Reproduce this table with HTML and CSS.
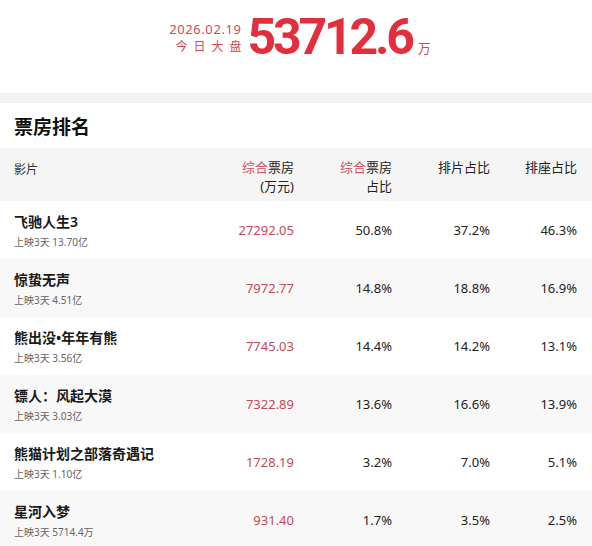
FILE: index.html
```html
<!DOCTYPE html>
<html>
<head>
<meta charset="utf-8">
<link rel="stylesheet" href="styles.css">
</head>
<body>
<div class="page">
  <header class="top">
    <div class="top-left">
      <div class="date">2026.02.19</div>
      <div class="today">今日大盘</div>
    </div>
    <div class="big">53712.6</div>
    <div class="unit">万</div>
  </header>
  <div class="band"></div>
  <h2 class="title">票房排名</h2>
  <div class="table">
    <div class="row head">
      <div class="c film">影片</div>
      <div class="c num"><span class="hl">综合</span>票房<br>(万元)</div>
      <div class="c num"><span class="hl">综合</span>票房<br>占比</div>
      <div class="c num">排片占比</div>
      <div class="c num">排座占比</div>
    </div>
    <div class="row">
      <div class="c film"><div class="name">飞驰人生3</div><div class="sub">上映3天 13.70亿</div></div>
      <div class="c num red">27292.05</div>
      <div class="c num">50.8%</div>
      <div class="c num">37.2%</div>
      <div class="c num">46.3%</div>
    </div>
    <div class="row alt">
      <div class="c film"><div class="name">惊蛰无声</div><div class="sub">上映3天 4.51亿</div></div>
      <div class="c num red">7972.77</div>
      <div class="c num">14.8%</div>
      <div class="c num">18.8%</div>
      <div class="c num">16.9%</div>
    </div>
    <div class="row">
      <div class="c film"><div class="name">熊出没•年年有熊</div><div class="sub">上映3天 3.56亿</div></div>
      <div class="c num red">7745.03</div>
      <div class="c num">14.4%</div>
      <div class="c num">14.2%</div>
      <div class="c num">13.1%</div>
    </div>
    <div class="row alt">
      <div class="c film"><div class="name">镖人：风起大漠</div><div class="sub">上映3天 3.03亿</div></div>
      <div class="c num red">7322.89</div>
      <div class="c num">13.6%</div>
      <div class="c num">16.6%</div>
      <div class="c num">13.9%</div>
    </div>
    <div class="row">
      <div class="c film"><div class="name">熊猫计划之部落奇遇记</div><div class="sub">上映3天 1.10亿</div></div>
      <div class="c num red">1728.19</div>
      <div class="c num">3.2%</div>
      <div class="c num">7.0%</div>
      <div class="c num">5.1%</div>
    </div>
    <div class="row alt">
      <div class="c film"><div class="name">星河入梦</div><div class="sub">上映3天 5714.4万</div></div>
      <div class="c num red">931.40</div>
      <div class="c num">1.7%</div>
      <div class="c num">3.5%</div>
      <div class="c num">2.5%</div>
    </div>
  </div>
</div>
</body>
</html>
```

FILE: styles.css
```css
* { box-sizing: border-box; margin: 0; padding: 0; }
html, body { background: #fff; }
body {
  margin: 0;
  font-family: "Noto Sans", "Noto Sans CJK SC", sans-serif;
  color: #222;
  width: 592px;
  overflow: hidden;
}
.page { width: 592px; }
.top {
  display: flex;
  justify-content: center;
  align-items: flex-end;
  height: 93px;
  padding-bottom: 31px;
  padding-left: 8px;
}
.top-left {
  display: flex;
  flex-direction: column;
  align-items: flex-end;
  padding-bottom: 6px;
  margin-right: 6px;
}
.date {
  font-size: 13px;
  line-height: 18px;
  color: #cf4a55;
  letter-spacing: 0.6px;
}
.today {
  font-size: 12px;
  line-height: 18px;
  color: #cf4a55;
  letter-spacing: 6px;
  margin-right: -6px;
}
.big {
  font-family: "Roboto", "Noto Sans", sans-serif;
  font-weight: 700;
  font-size: 50px;
  line-height: 50px;
  letter-spacing: -3.2px;
  color: #e12f3d;
}
.unit {
  font-size: 13px;
  line-height: 18px;
  color: #cf4a55;
  margin-left: 6px;
  padding-bottom: 5px;
}
.band { height: 10px; background: #f2f2f2; }
.title {
  font-size: 19px;
  font-weight: 700;
  line-height: 24px;
  color: #111;
  padding: 12px 14px 9px;
}
.row {
  display: grid;
  grid-template-columns: 182px 98px 98px 98px 87px;
  padding: 0 15px 0 14px;
  height: 58px;
  align-items: center;
}
.row.alt { background: #f8f8f8; }
.row.head {
  background: #f5f5f5;
  height: 53px;
  align-items: start;
  padding-top: 10px;
}
.head .c { font-size: 12px; line-height: 19px; color: #333; }
.hl { color: #d0505c; }
.c.num { text-align: right; font-size: 13px; color: #222; }
.c.num.red { color: #c54a57; }
.film { padding-top: 2px; }
.name {
  font-size: 14px;
  font-weight: 600;
  line-height: 20px;
  color: #1a1a1a;
}
.sub {
  font-size: 10px;
  line-height: 16px;
  color: #666;
  margin-top: 2px;
}
```
